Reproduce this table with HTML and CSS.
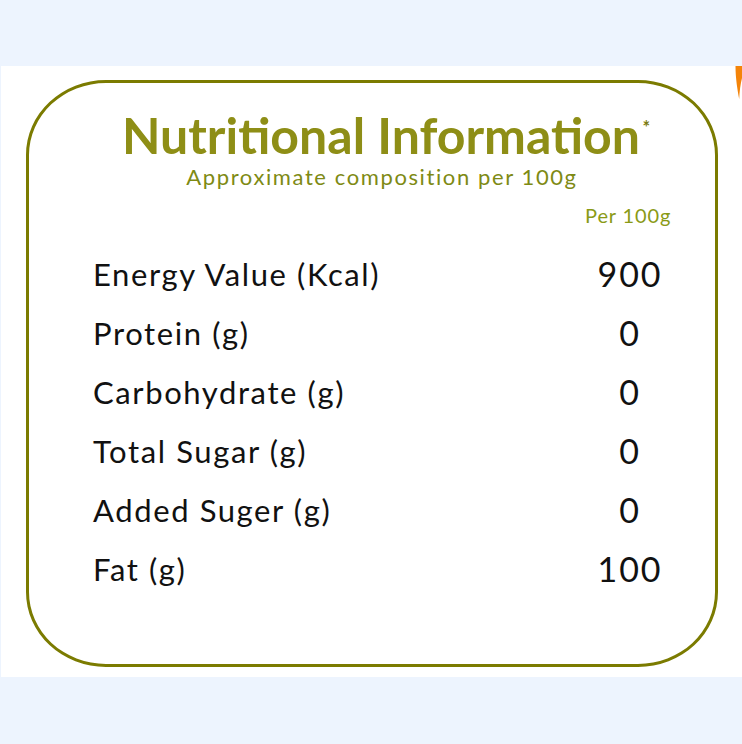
FILE: index.html
```html
<!DOCTYPE html>
<html>
<head>
<meta charset="utf-8">
<link rel="stylesheet" href="styles.css">
</head>
<body>
<div class="panel">
  <svg class="swoosh" width="8" height="36" viewBox="0 0 8 36"><path d="M1.5 0 L8 0 L8 12 C6.5 18 5.5 25 5.2 33 C3.5 24 1.5 12 1.5 0 Z" fill="#f48409"/></svg>
  <div class="card">
    <h1 class="title">Nutritional Information<sup class="star">*</sup></h1>
    <p class="subtitle">Approximate composition per 100g</p>
    <div class="table">
      <div class="head"><span></span><span class="per">Per 100g</span></div>
      <div class="row"><span class="label">Energy Value (Kcal)</span><span class="val">900</span></div>
      <div class="row"><span class="label">Protein (g)</span><span class="val">0</span></div>
      <div class="row"><span class="label">Carbohydrate (g)</span><span class="val">0</span></div>
      <div class="row"><span class="label">Total Sugar (g)</span><span class="val">0</span></div>
      <div class="row"><span class="label">Added Suger (g)</span><span class="val">0</span></div>
      <div class="row"><span class="label">Fat (g)</span><span class="val">100</span></div>
    </div>
  </div>
</div>
</body>
</html>
```

FILE: styles.css
```css
html, body {
  margin: 0;
  padding: 0;
  background: #edf4fe;
  width: 742px;
  height: 744px;
  overflow: hidden;
}
.panel {
  position: relative;
  margin: 66px 0 0 1px;
  height: 611px;
  background: #ffffff;
  padding: 14px 0 0 25px;
  box-sizing: border-box;
}
.swoosh {
  position: absolute;
  right: 0;
  top: 0;
}
.card {
  width: 692px;
  height: 587px;
  box-sizing: border-box;
  border: 3px solid #7b7b00;
  border-radius: 80px / 75px;
  font-family: "Lato", "Noto Sans", sans-serif;
  display: flex;
  flex-direction: column;
  align-items: center;
}
.title {
  margin: 23px 0 0 0;
  font-size: 50px;
  line-height: 58px;
  font-weight: 700;
  color: #8e8e16;
  letter-spacing: 0;
  position: relative;
  left: 9px;
}
.star {
  font-size: 18px;
  font-weight: 700;
  position: absolute;
  top: -8px;
  right: -10px;
  color: #7b7b10;
}
.subtitle {
  margin: 0;
  font-size: 22px;
  line-height: 26px;
  letter-spacing: 1.6px;
  color: #7e8a14;
  position: relative;
  left: 10px;
}
.table {
  align-self: stretch;
  display: flex;
  flex-direction: column;
  padding: 0 10px 0 64px;
}
.head, .row {
  display: grid;
  grid-template-columns: 1fr 120px;
}
.head {
  margin-top: 13px;
  height: 41px;
}
.per {
  font-size: 20px;
  letter-spacing: 0.9px;
  color: #8a9a16;
  text-align: center;
  line-height: 24px;
  padding-right: 38px;
  white-space: nowrap;
}
.row {
  height: 59px;
  align-items: center;
  font-size: 31px;
  letter-spacing: 1.6px;
  color: #111111;
}
.label {
  white-space: nowrap;
}
.val {
  text-align: center;
  letter-spacing: 2px;
  font-size: 34px;
  padding-right: 30px;
}
```
